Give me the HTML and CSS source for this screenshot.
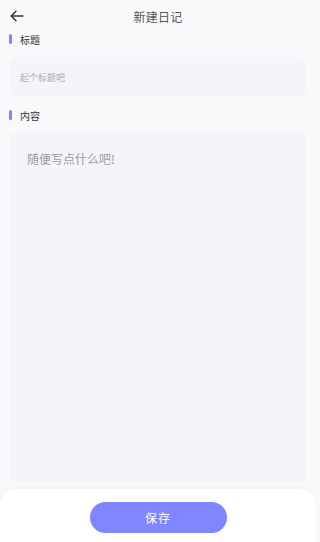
FILE: index.html
```html
<!DOCTYPE html>
<html lang="zh-CN">
<head>
<meta charset="utf-8">
<title>新建日记</title>
<link rel="stylesheet" href="styles.css">
</head>
<body>
<div class="page">
  <header class="header">
    <button class="back" aria-label="返回">
      <svg width="14" height="12" viewBox="0 0 14 12" fill="none" stroke="#333" stroke-width="1.5" stroke-linecap="round" stroke-linejoin="round">
        <path d="M13 6H1.5M6 1.2L1.2 6L6 10.8"/>
      </svg>
    </button>
    <h1 class="title">新建日记</h1>
  </header>
  <main class="form">
    <div class="label"><span class="bar"></span>标题</div>
    <div class="input">起个标题吧</div>
    <div class="label label-2"><span class="bar"></span>内容</div>
    <div class="textarea">随便写点什么吧!</div>
  </main>
  <footer class="footer">
    <button class="save">保存</button>
  </footer>
</div>
</body>
</html>
```

FILE: styles.css
```css
* { box-sizing: border-box; }
html, body { margin: 0; padding: 0; }
body {
  background: #f9f9fb;
  font-family: "Noto Sans CJK SC", "Noto Sans", sans-serif;
  width: 316px;
  height: 542px;
  overflow: hidden;
}
.page {
  display: flex;
  flex-direction: column;
  height: 542px;
}
.header {
  height: 33px;
  display: flex;
  align-items: center;
  justify-content: center;
  position: relative;
}
.back {
  position: absolute;
  left: 10px;
  top: 10px;
  padding: 0;
  border: 0;
  background: none;
  display: flex;
}
.title {
  margin: 0;
  font-size: 12px;
  font-weight: 400;
  color: #555;
  letter-spacing: 0.3px;
}
.form {
  flex: 1;
  display: flex;
  flex-direction: column;
  padding: 0 10px;
}
.label {
  display: flex;
  align-items: center;
  height: 12px;
  font-size: 10px;
  color: #333;
  margin-left: -1px;
}
.bar {
  width: 3px;
  height: 10px;
  border-radius: 2px;
  background: #8086ff;
  margin-right: 8px;
}
.input {
  margin-top: 12px;
  height: 40px;
  border-radius: 7px;
  background: #f4f5f9;
  padding-left: 10px;
  display: flex;
  align-items: center;
  font-size: 9px;
  color: #aaaab0;
}
.label-2 { margin-top: 12px; }
.textarea {
  margin-top: 11px;
  height: 350px;
  border-radius: 7px;
  background: #f4f5f9;
  padding: 18px 17px;
  font-size: 12px;
  color: #9c9ca2;
  line-height: 17px;
}
.footer {
  height: 53px;
  background: #fff;
  border-radius: 16px 16px 0 0;
  box-shadow: 0 -2px 6px rgba(0,0,0,0.03);
  display: flex;
  justify-content: center;
  padding-top: 13px;
}
.save {
  width: 137px;
  height: 31px;
  border: 0;
  border-radius: 16px;
  background: #8086ff;
  color: #fff;
  font-family: inherit;
  font-size: 12px;
  letter-spacing: 1px;
}
```
